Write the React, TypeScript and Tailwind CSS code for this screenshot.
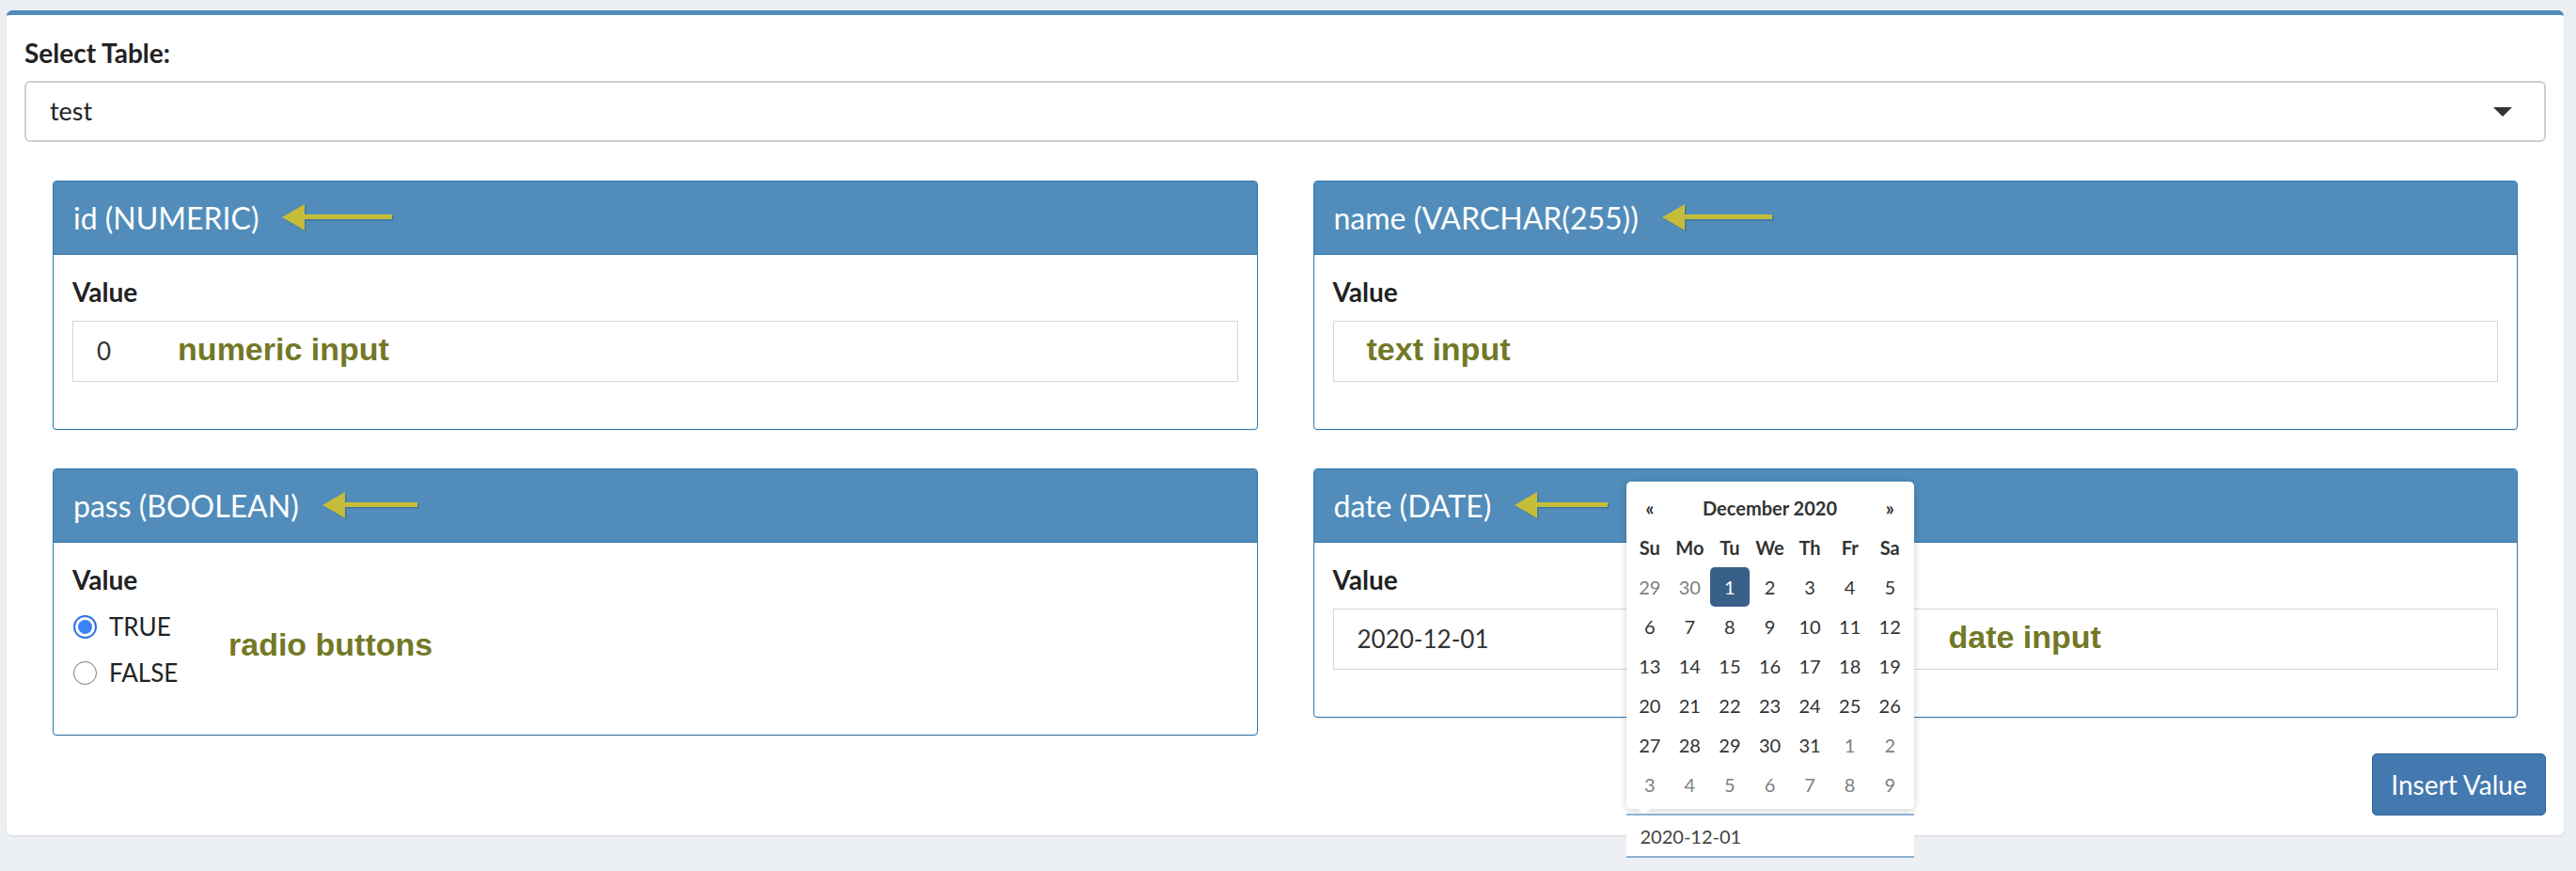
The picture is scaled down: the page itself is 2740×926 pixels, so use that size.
import React from 'react';

const FONT = "font-['Lato','Open_Sans',sans-serif]";

// yellow annotation arrow pointing left
const Arrow = ({ width }: { width: number }) => (
  <svg width={width} height={30} viewBox={`0 0 ${width} 30`} className="ml-[25px] shrink-0">
    <g transform="translate(1.5,1.5)" fill="#2b4b66" opacity="0.35">
      <polygon points={`0,14 24,0 24,11 ${width - 2},11 ${width - 2},16 24,16 24,28`} />
    </g>
    <polygon points={`0,14 24,0 24,11 ${width - 2},11 ${width - 2},16 24,16 24,28`} fill="#c5bd3a" />
  </svg>
);

const Note = ({ children }: { children: React.ReactNode }) => (
  <span className="font-['Liberation_Sans',Arial,sans-serif] text-[34px] font-bold text-[#737826] leading-none">
    {children}
  </span>
);

type PanelProps = {
  title: string;
  arrow: number;
  children: React.ReactNode;
  overlay?: React.ReactNode;
  bottom?: string;
};

const Panel = ({ title, arrow, children, overlay, bottom = 'pb-[50px]' }: PanelProps) => (
  <div className="relative rounded-[4px] border-[1.5px] border-[#2f78b0] bg-white shadow-[0_1px_1px_rgba(0,0,0,0.1)]">
    <div className="flex h-[78px] items-center rounded-t-[3px] border-b-[1.5px] border-[#2f78b0] bg-[#518cba] pl-[21px]">
      <span className="text-[32px] leading-none text-white">{title}</span>
      <Arrow width={arrow} />
    </div>
    <div className={`relative px-[20px] pt-[19px] ${bottom}`}>
      <div className="text-[28px] font-bold leading-[40px] text-[#222]">Value</div>
      {children}
    </div>
    {overlay}
  </div>
);

const Input = ({ children }: { children: React.ReactNode }) => (
  <div className="mt-[11px] flex h-[65px] items-center border-[1.5px] border-[#d2d6de] text-[26px] text-[#333]">
    {children}
  </div>
);

const Radio = ({ label, checked }: { label: string; checked?: boolean }) => (
  <label className="flex h-[40px] items-center gap-[13px] pl-[1px] text-[26px] text-[#222]">
    {checked ? (
      <span className="flex h-[25px] w-[25px] items-center justify-center rounded-full border-[2px] border-[#2f6fe0]">
        <span className="h-[15px] w-[15px] rounded-full bg-[#3b82f6]" />
      </span>
    ) : (
      <span className="h-[25px] w-[25px] rounded-full border-[1.5px] border-[#767676] bg-white" />
    )}
    {label}
  </label>
);

const weeks = [
  ['29', '30', '1', '2', '3', '4', '5'],
  ['6', '7', '8', '9', '10', '11', '12'],
  ['13', '14', '15', '16', '17', '18', '19'],
  ['20', '21', '22', '23', '24', '25', '26'],
  ['27', '28', '29', '30', '31', '1', '2'],
  ['3', '4', '5', '6', '7', '8', '9'],
];

const DatePicker = () => (
  <div className="absolute left-[332px] top-[13px] z-10 w-[306px]">
    <div className="rounded-[5px] bg-white px-[4px] pt-[7px] pb-[5px] text-[20px] text-[#333] shadow-[0_2px_8px_rgba(0,0,0,0.18)]">
      <div className="grid grid-cols-7">
        <div className="flex h-[42px] items-center justify-center font-bold">«</div>
        <div className="col-span-5 flex h-[42px] items-center justify-center font-bold">December 2020</div>
        <div className="flex h-[42px] items-center justify-center font-bold">»</div>
        {['Su', 'Mo', 'Tu', 'We', 'Th', 'Fr', 'Sa'].map((d) => (
          <div key={d} className="flex h-[42px] items-center justify-center font-bold">
            {d}
          </div>
        ))}
        {weeks.map((week, wi) =>
          week.map((day, di) => {
            const muted = (wi === 0 && di < 2) || (wi === 4 && di > 4) || wi === 5;
            const active = wi === 0 && di === 2;
            return (
              <div
                key={`${wi}-${di}`}
                className={
                  active
                    ? 'flex h-[42px] items-center justify-center rounded-[5px] bg-[#386089] text-white'
                    : muted
                    ? 'flex h-[42px] items-center justify-center text-[#808080]'
                    : 'flex h-[42px] items-center justify-center'
                }
              >
                {day}
              </div>
            );
          })
        )}
      </div>
    </div>
    <div className="ml-[12px] h-0 w-0 border-x-[7px] border-t-[6px] border-x-transparent border-t-white" />
    <div className="-mt-[1px] flex h-[47px] items-center border-y-[2px] border-[#8cb0d4] bg-white pl-[15px] text-[20px] text-[#444]">
      2020-12-01
    </div>
  </div>
);

export default function App() {
  return (
    <div className={`min-h-screen bg-[#ecf0f5] pt-[11px] pl-[7px] ${FONT}`}>
      <div className="h-[877px] w-[2720px] rounded-[6px] border-t-[5px] border-[#4f8cba] bg-white px-[19px] pt-[20px] shadow-[0_1px_2px_rgba(0,0,0,0.1)]">
        <div className="text-[28px] font-bold leading-[40px] text-[#222]">Select Table:</div>
        <div className="mt-[10px] flex h-[65px] items-center justify-between rounded-[6px] border-[2px] border-[#cfcfcf] pl-[25px] pr-[34px] text-[27px] text-[#222]">
          <span>test</span>
          <svg width="20" height="10" viewBox="0 0 20 10">
            <polygon points="0,0 20,0 10,10" fill="#333" />
          </svg>
        </div>

        <div className="mt-[41px] grid grid-cols-2 items-start gap-x-[59px] gap-y-[41px] px-[30px]">
          <Panel title="id (NUMERIC)" arrow={119}>
            <Input>
              <span className="ml-[25px]">0</span>
              <span className="ml-[71px]">
                <Note>numeric input</Note>
              </span>
            </Input>
          </Panel>

          <Panel title="name (VARCHAR(255))" arrow={119}>
            <Input>
              <span className="ml-[35px]">
                <Note>text input</Note>
              </span>
            </Input>
          </Panel>

          <Panel title="pass (BOOLEAN)" arrow={103} bottom="pb-[46px]">
            <div className="mt-[10px] flex flex-col gap-[9px]">
              <Radio label="TRUE" checked />
              <Radio label="FALSE" />
            </div>
            <div className="absolute left-[186px] top-[91px]">
              <Note>radio buttons</Note>
            </div>
          </Panel>

          <Panel title="date (DATE)" arrow={101} overlay={<DatePicker />}>
            <Input>
              <span className="ml-[25px]">2020-12-01</span>
              <span className="ml-[489px]">
                <Note>date input</Note>
              </span>
            </Input>
          </Panel>
        </div>

        <div className="mt-[19px] flex justify-end">
          <button className="h-[66px] w-[185px] rounded-[5px] border-[1.5px] border-[#2e6099] bg-[#4479b0] text-[28px] text-white">
            Insert Value
          </button>
        </div>
      </div>
    </div>
  );
}
